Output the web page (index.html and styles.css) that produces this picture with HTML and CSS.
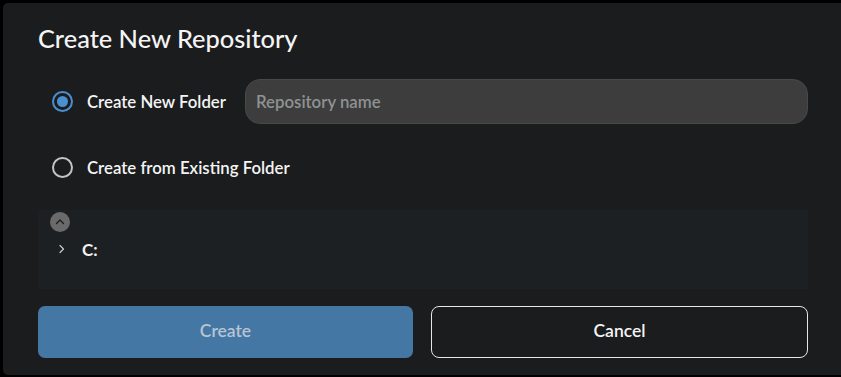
FILE: index.html
```html
<!DOCTYPE html>
<html lang="en">
<head>
<meta charset="utf-8">
<title>Create New Repository</title>
<link rel="stylesheet" href="styles.css">
</head>
<body>
<div class="dialog">
  <h1 class="title">Create New Repository</h1>
  <div class="option">
    <span class="radio checked"><span class="dot"></span></span>
    <span class="label">Create New Folder</span>
    <input class="name-input" type="text" placeholder="Repository name">
  </div>
  <div class="option">
    <span class="radio"></span>
    <span class="label">Create from Existing Folder</span>
  </div>
  <div class="tree">
    <span class="up-btn">
      <svg width="12" height="12" viewBox="0 0 12 12"><path d="M2.5 7.5 L6 4 L9.5 7.5" fill="none" stroke="#1c1e20" stroke-width="1.4" stroke-linecap="round" stroke-linejoin="round"/></svg>
    </span>
    <div class="tree-item">
      <svg class="chev" width="10" height="10" viewBox="0 0 10 10"><path d="M3 1.5 L6.5 5 L3 8.5" fill="none" stroke="#c8c8c8" stroke-width="1.2" stroke-linecap="round" stroke-linejoin="round"/></svg>
      <span class="drive">C:</span>
    </div>
  </div>
  <div class="actions">
    <button class="btn primary">Create</button>
    <button class="btn secondary">Cancel</button>
  </div>
</div>
</body>
</html>
```

FILE: styles.css
```css
html, body {
  margin: 0;
  padding: 0;
  background: #000;
}
body {
  font-family: Lato, "Open Sans", sans-serif;
  color: #f2f2f2;
}
.dialog {
  box-sizing: border-box;
  margin: 3px 0 0 3px;
  width: 838px;
  height: 372px;
  background: #1b1c1e;
  border-radius: 5px 0 0 5px;
  padding: 20px 33px 17px 35px;
  display: flex;
  flex-direction: column;
}
.title {
  margin: 0;
  font-size: 25.4px;
  line-height: 30px;
  font-weight: 500;
  color: #f4f4f4;
}
.option {
  display: flex;
  align-items: center;
  height: 45px;
  padding-left: 14px;
}
.option:first-of-type {
  margin-top: 26px;
}
.option + .option {
  margin-top: 21px;
  height: 44px;
}
.radio {
  box-sizing: border-box;
  width: 21px;
  height: 21px;
  border-radius: 50%;
  border: 2px solid #c4c4c4;
  display: flex;
  align-items: center;
  justify-content: center;
  flex: none;
}
.radio.checked {
  border-color: #4a8fcf;
}
.dot {
  width: 11px;
  height: 11px;
  border-radius: 50%;
  background: #4a8fcf;
}
.label {
  margin-left: 14px;
  font-size: 16.8px;
  font-weight: 600;
  color: #f4f4f4;
}
.name-input {
  box-sizing: border-box;
  margin-left: 19px;
  flex: 1;
  height: 45px;
  border-radius: 15px;
  border: 1px solid #474948;
  background: #3c3d3c;
  padding: 0 10px;
  font-family: Lato, "Open Sans", sans-serif;
  font-size: 16.8px;
  font-weight: 600;
  color: #eee;
  outline: none;
}
.name-input::placeholder {
  color: #8f9294;
}
.tree {
  margin-top: 21px;
  height: 79px;
  box-sizing: border-box;
  background: #1d2022;
  padding: 2px 12px 0;
}
.up-btn {
  width: 20px;
  height: 20px;
  border-radius: 50%;
  background: #6a6a6a;
  display: flex;
  align-items: center;
  justify-content: center;
}
.tree-item {
  display: flex;
  align-items: center;
  height: 30px;
  margin-top: 2px;
  padding-left: 7px;
}
.chev {
  flex: none;
}
.drive {
  margin-left: 15px;
  font-size: 17px;
  font-weight: 700;
  color: #f2f2f2;
}
.actions {
  margin-top: 17px;
  display: grid;
  grid-template-columns: 375px 1fr;
  gap: 18px;
  height: 52px;
}
.btn {
  font-family: Lato, "Open Sans", sans-serif;
  font-size: 17.5px;
  font-weight: 600;
  border-radius: 7px;
  padding: 0 0 3px;
  cursor: pointer;
}
.primary {
  background: #4577a5;
  border: none;
  color: #b7c5d2;
}
.secondary {
  background: transparent;
  border: 1px solid #e6e6e6;
  color: #f4f4f4;
  border-radius: 8px;
}
```
